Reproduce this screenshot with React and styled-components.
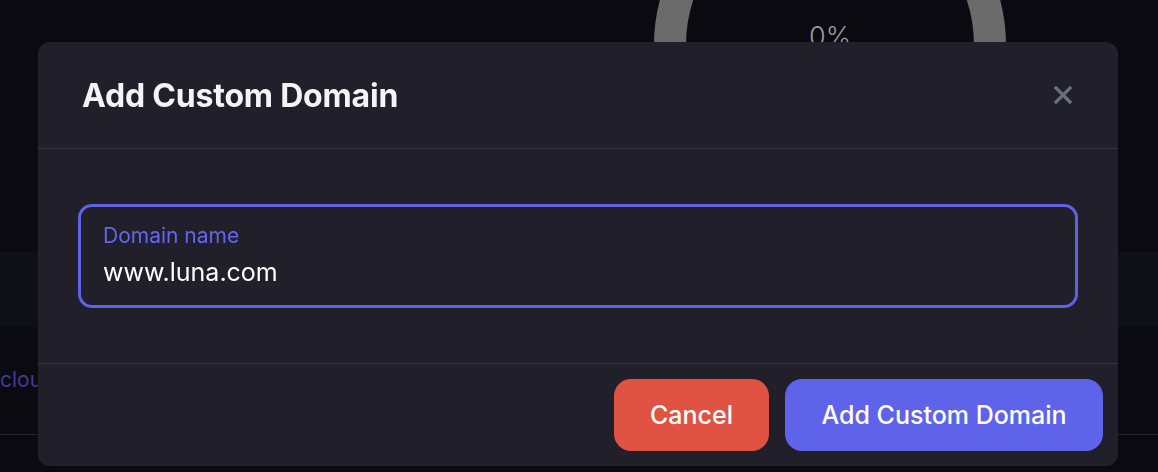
import React from "react";
import styled, { createGlobalStyle } from "styled-components";

const GlobalStyle = createGlobalStyle`
  html, body {
    margin: 0;
    padding: 0;
    background: #0b0a10;
    font-family: "Inter", "Noto Sans", sans-serif;
    overflow: hidden;
  }
  * {
    box-sizing: border-box;
  }
`;

export default function App() {
  return (
    <>
      <GlobalStyle />
      <Page>
        <RingArea>
          <svg width="360" height="360" viewBox="0 0 360 360">
            <circle
              cx="180"
              cy="180"
              r="160"
              fill="none"
              stroke="#6b6b6b"
              strokeWidth="32"
            />
          </svg>
          <RingLabel>0%</RingLabel>
        </RingArea>
        <Band />
        <LinkRow>
          <LinkText>cloudflare.luna.com</LinkText>
        </LinkRow>
      </Page>

      <Overlay>
        <Modal>
          <ModalHeader>
            <Title>Add Custom Domain</Title>
            <CloseButton aria-label="Close">
              <svg width="18" height="18" viewBox="0 0 18 18">
                <path
                  d="M2 2 L16 16 M16 2 L2 16"
                  stroke="#6b7080"
                  strokeWidth="3.2"
                  strokeLinecap="square"
                />
              </svg>
            </CloseButton>
          </ModalHeader>
          <ModalBody>
            <Field>
              <FieldLabel>Domain name</FieldLabel>
              <FieldInput defaultValue="www.luna.com" />
            </Field>
          </ModalBody>
          <ModalFooter>
            <Button $variant="danger" $width={155}>
              Cancel
            </Button>
            <Button $variant="primary" $width={318}>
              Add Custom Domain
            </Button>
          </ModalFooter>
        </Modal>
      </Overlay>
    </>
  );
}

const Page = styled.div`
  width: 100%;
  height: 472px;
  display: flex;
  flex-direction: column;
  background: #0b0a10;
`;

const RingArea = styled.div`
  position: relative;
  align-self: flex-start;
  margin-left: 650px;
  margin-top: -135px;
  width: 360px;
  height: 360px;
  flex-shrink: 0;
`;

const RingLabel = styled.div`
  position: absolute;
  left: 0;
  right: 0;
  top: 155px;
  text-align: center;
  font-size: 27px;
  font-weight: 300;
  color: #9a9a9c;
`;

const Band = styled.div`
  margin-top: 27px;
  height: 75px;
  background: #0d1017;
  flex-shrink: 0;
`;

const LinkRow = styled.div`
  height: 108px;
  border-bottom: 1px solid #25252b;
  display: flex;
  align-items: center;
  flex-shrink: 0;
`;

const LinkText = styled.span`
  margin-top: -2px;
  font-size: 21px;
  color: #3b3c9c;
`;

const Overlay = styled.div`
  position: fixed;
  inset: 0;
  padding: 42px 40px 6px 38px;
  display: flex;
`;

const Modal = styled.div`
  flex: 1;
  display: flex;
  flex-direction: column;
  background: #211f29;
  border-radius: 12px;
  overflow: hidden;
`;

const ModalHeader = styled.div`
  height: 107px;
  padding: 0 46px 0 44px;
  display: flex;
  align-items: center;
  justify-content: space-between;
  border-bottom: 1px solid #34323d;
`;

const Title = styled.h2`
  margin: 0;
  font-size: 32px;
  font-weight: 700;
  color: #f4f4f6;
  letter-spacing: -0.2px;
`;

const CloseButton = styled.button`
  border: none;
  background: none;
  padding: 0;
  display: flex;
  cursor: pointer;
`;

const ModalBody = styled.div`
  padding: 55px 40px;
  border-bottom: 1px solid #34323d;
`;

const Field = styled.label`
  height: 104px;
  display: flex;
  flex-direction: column;
  justify-content: center;
  gap: 8px;
  padding: 0 22px 0;
  border: 3px solid #5f62e6;
  border-radius: 14px;
`;

const FieldLabel = styled.span`
  font-size: 21px;
  color: #6366f1;
  line-height: 24px;
`;

const FieldInput = styled.input`
  border: none;
  outline: none;
  background: transparent;
  padding: 0;
  font-family: inherit;
  font-size: 25px;
  line-height: 32px;
  color: #ffffff;
`;

const ModalFooter = styled.div`
  flex: 1;
  display: flex;
  justify-content: flex-end;
  align-items: flex-start;
  gap: 16px;
  padding: 15px 15px 0;
`;

const Button = styled.button`
  width: ${(p) => p.$width}px;
  height: 72px;
  padding: 0;
  border: none;
  border-radius: 17px;
  font-family: inherit;
  font-size: 25px;
  font-weight: 500;
  color: #ffffff;
  cursor: pointer;
  background: ${(p) => (p.$variant === "danger" ? "#e05343" : "#5f63ea")};
`;
